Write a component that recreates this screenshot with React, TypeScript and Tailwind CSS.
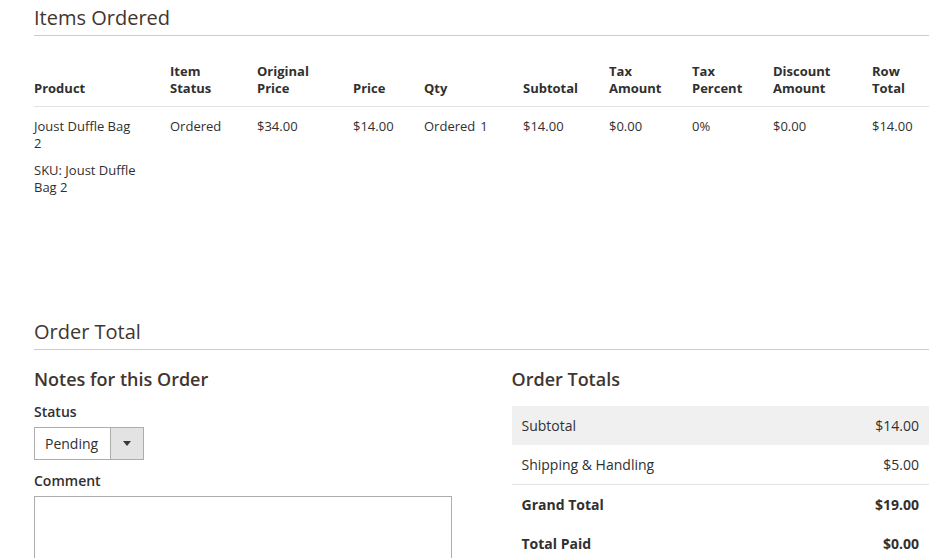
import React from 'react';

const font = { fontFamily: "'Open Sans', 'Noto Sans', sans-serif" };

const columns = [
  { lines: ['Product'], width: 'w-[136px]' },
  { lines: ['Item', 'Status'], width: 'w-[87px]' },
  { lines: ['Original', 'Price'], width: 'w-[96px]' },
  { lines: ['Price'], width: 'w-[71px]' },
  { lines: ['Qty'], width: 'w-[99px]' },
  { lines: ['Subtotal'], width: 'w-[86px]' },
  { lines: ['Tax', 'Amount'], width: 'w-[83px]' },
  { lines: ['Tax', 'Percent'], width: 'w-[81px]' },
  { lines: ['Discount', 'Amount'], width: 'w-[99px]' },
  { lines: ['Row', 'Total'], width: 'w-[57px]' },
];

const totals = [
  { label: 'Subtotal', value: '$14.00', shaded: true },
  { label: 'Shipping & Handling', value: '$5.00' },
  { label: 'Grand Total', value: '$19.00', strong: true, divider: true },
  { label: 'Total Paid', value: '$0.00', strong: true },
];

const SectionTitle = ({ children }: { children: React.ReactNode }) => (
  <div className="border-b border-[#cccccc] pt-[6px] pb-[5px]">
    <h2 className="text-[20px] leading-[24px] font-normal text-[#41362f]">{children}</h2>
  </div>
);

export default function App() {
  return (
    <div className="h-[558px] overflow-hidden bg-white pl-[34px] pr-[6px] text-[14px] text-[#303030]" style={font}>
      {/* ── Items Ordered ─────────────────────────────── */}
      <section>
        <SectionTitle>Items Ordered</SectionTitle>
        <table className="mt-[18px] w-full table-fixed border-collapse text-left">
          <thead>
            <tr className="border-b border-[#e3e3e3]">
              {columns.map((col) => (
                <th
                  key={col.lines.join(' ')}
                  className={`${col.width} pt-[9px] pb-[9px] pr-[10px] align-bottom text-[13px] leading-[17px] font-bold text-[#303030]`}
                >
                  {col.lines.map((line) => (
                    <span key={line} className="block">
                      {line}
                    </span>
                  ))}
                </th>
              ))}
            </tr>
          </thead>
          <tbody className="text-[13px] leading-[17px]">
            <tr className="align-top">
              <td className="pt-[11px] pb-[10px] pr-[10px]">
                <div>
                  <span className="block">Joust Duffle Bag</span>
                  <span className="block">2</span>
                </div>
                <div className="mt-[10px]">
                  <span className="block">SKU: Joust Duffle</span>
                  <span className="block">Bag 2</span>
                </div>
              </td>
              <td className="pt-[11px] pr-[10px]">Ordered</td>
              <td className="pt-[11px] pr-[10px]">$34.00</td>
              <td className="pt-[11px] pr-[10px]">$14.00</td>
              <td className="pt-[11px] pr-[10px]">
                <div className="flex gap-[5px]">
                  <span>Ordered</span>
                  <span>1</span>
                </div>
              </td>
              <td className="pt-[11px] pr-[10px]">$14.00</td>
              <td className="pt-[11px] pr-[10px]">$0.00</td>
              <td className="pt-[11px] pr-[10px]">0%</td>
              <td className="pt-[11px] pr-[10px]">$0.00</td>
              <td className="pt-[11px]">$14.00</td>
            </tr>
          </tbody>
        </table>
      </section>

      {/* ── Order Total ───────────────────────────────── */}
      <section className="mt-[108px]">
        <SectionTitle>Order Total</SectionTitle>
        <div className="mt-[17px] grid grid-cols-2 gap-[60px]">
          {/* Notes */}
          <div>
            <h3 className="text-[18px] leading-[24px] font-semibold text-[#41362f]">Notes for this Order</h3>
            <label className="mt-[12px] block leading-[17px] font-semibold">Status</label>
            <div className="mt-[7px] flex h-[33px] w-[110px] border border-[#adadad] bg-white">
              <span className="flex flex-1 items-center pl-[10px] text-[14px]">Pending</span>
              <span className="flex w-[33px] items-center justify-center border-l border-[#adadad] bg-[#e3e3e3]">
                <span className="h-0 w-0 border-x-[4px] border-t-[5px] border-x-transparent border-t-[#41362f]" />
              </span>
            </div>
            <label className="mt-[12px] block leading-[17px] font-semibold">Comment</label>
            <textarea className="mt-[7px] block h-[100px] w-full border border-[#adadad] bg-white" />
          </div>

          {/* Totals */}
          <div>
            <h3 className="text-[18px] leading-[24px] font-semibold text-[#41362f]">Order Totals</h3>
            <div className="mt-[15px]">
              {totals.map((row) => (
                <div
                  key={row.label}
                  className={`flex justify-between px-[10px] py-[10px] leading-[19px] ${
                    row.shaded ? 'bg-[#f0f0f0]' : ''
                  } ${row.divider ? 'border-t border-[#e3e3e3]' : ''} ${row.strong ? 'font-bold' : ''}`}
                >
                  <span>{row.label}</span>
                  <span>{row.value}</span>
                </div>
              ))}
            </div>
          </div>
        </div>
      </section>
    </div>
  );
}
